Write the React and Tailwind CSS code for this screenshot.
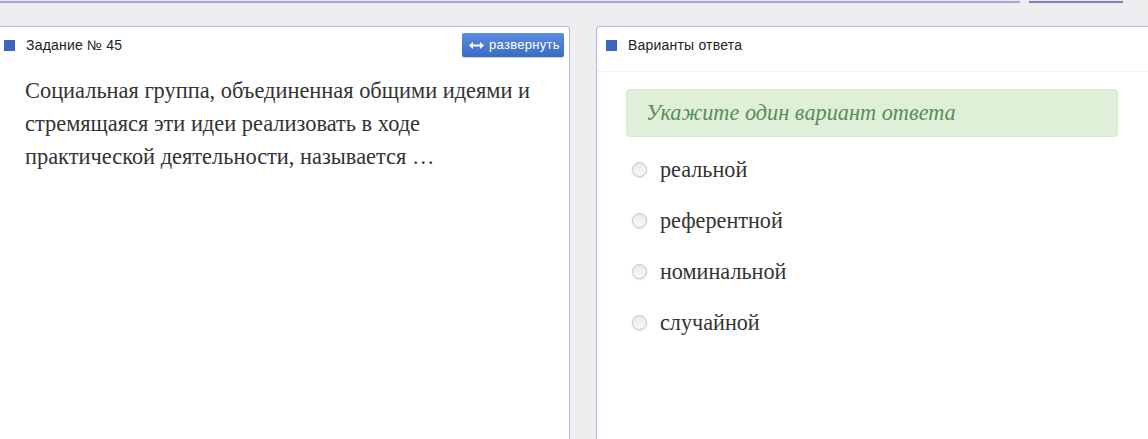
import React from 'react'

const options = ["реальной", "референтной", "номинальной", "случайной"]

const Square = () => <span className="inline-block w-[11px] h-[11px] bg-[#3b68bd] shrink-0" />

const App = () => {
    return (
        <div className="w-[1148px] h-[439px] overflow-hidden bg-[#eeeef1] font-['Liberation_Sans',Arial,sans-serif]">
            {/* TOP BAR REMAINS */}
            <div className="flex h-[3px]">
                <div className="w-[1020px] border-b-2 border-[#a3a7d6] bg-[#e6e7ef]" />
                <div className="w-[94px] ml-[9px] border-b-2 border-[#7f84b8] bg-[#e6e7ef]" />
            </div>

            <div className="flex mt-[23px] gap-[26px]">
                {/* QUESTION PANEL */}
                <div className="w-[570px] h-[420px] shrink-0 bg-white border border-l-0 border-[#b4b7d6] rounded-tr-[4px]">
                    <div className="h-[34px] flex items-center justify-between pl-[4px] pr-[5px] pt-[2px]">
                        <div className="flex items-center gap-[11px]">
                            <Square />
                            <span className="text-[14px] tracking-[0.2px] text-[#222]">Задание № 45</span>
                        </div>
                        <button className="h-[24px] w-[102px] rounded-[2px] bg-gradient-to-b from-[#5a8de0] to-[#3a6bc5] text-white text-[13px] flex items-center pl-[7px] gap-[5px] shadow-[0_1px_1px_rgba(0,0,0,0.2)]">
                            <svg width="15" height="9" viewBox="0 0 15 9" className="shrink-0">
                                <path d="M3 4.5h9" stroke="white" strokeWidth="2" />
                                <path d="M0 4.5L4 1v7z M15 4.5L11 1v7z" fill="white" />
                            </svg>
                            <span className="tracking-[0.3px]">развернуть</span>
                        </button>
                    </div>
                    <p className="mt-[13px] pl-[25px] pr-[30px] font-['Liberation_Serif','Times_New_Roman',serif] text-[22.4px] leading-[33px] text-[#333]">
                        Социальная группа, объединенная общими идеями и стремящаяся эти идеи реализовать в ходе практической деятельности, называется …
                    </p>
                </div>

                {/* ANSWERS PANEL */}
                <div className="flex-1 h-[420px] bg-white border border-r-0 border-[#b4b7d6] rounded-tl-[4px]">
                    <div className="h-[45px] flex items-center gap-[11px] pl-[9px] pb-[7px] border-b border-[#f0f0f0]">
                        <Square />
                        <span className="text-[14px] tracking-[0.2px] text-[#222]">Варианты ответа</span>
                    </div>
                    <div className="pl-[29px] pr-[30px] pt-[17px]">
                        <div className="h-[48px] rounded-[4px] bg-[#dff0d8] border border-[#d6e9c6] flex items-center pl-[19px] font-['Liberation_Serif','Times_New_Roman',serif] italic text-[22.3px] text-[#5b8c58]">
                            Укажите один вариант ответа
                        </div>
                        <div className="mt-[22px] flex flex-col gap-[30px]">
                            {options.map(o => (
                                <label key={o} className="flex items-center gap-[13px] h-[21px]">
                                    <span className="ml-[6px] w-[15px] h-[15px] rounded-full border border-[#c4c4c4] bg-gradient-to-b from-[#eaeaea] to-[#fafafa] shadow-[0_1px_2px_rgba(0,0,0,0.12)]" />
                                    <span className="font-['Liberation_Serif','Times_New_Roman',serif] text-[22.2px] text-[#333]">{o}</span>
                                </label>
                            ))}
                        </div>
                    </div>
                </div>
            </div>
        </div>
    )
}

export default App
